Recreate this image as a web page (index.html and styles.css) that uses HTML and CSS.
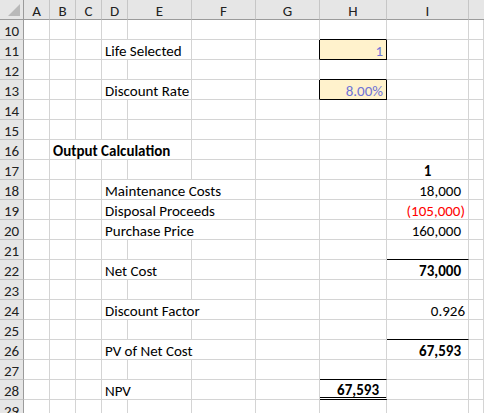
FILE: index.html
```html
<!DOCTYPE html>
<html>
<head>
<meta charset="utf-8">
<link rel="stylesheet" href="styles.css">
</head>
<body>
<div class="sheet">
  <div class="corner"><span class="tri"></span></div>
  <div class="ch">A</div><div class="ch">B</div><div class="ch">C</div><div class="ch">D</div><div class="ch">E</div><div class="ch">F</div><div class="ch">G</div><div class="ch">H</div><div class="ch">I</div><div class="ch last"></div>

  <div class="rh">10</div><div class="c"></div><div class="c"></div><div class="c"></div><div class="c"></div><div class="c"></div><div class="c"></div><div class="c"></div><div class="c bb"></div><div class="c"></div><div class="c"></div>

  <div class="rh">11</div><div class="c"></div><div class="c"></div><div class="c"></div><div class="c txt s2">Life Selected</div><div class="c"></div><div class="c br"></div><div class="c inp">1</div><div class="c"></div><div class="c"></div>

  <div class="rh">12</div><div class="c"></div><div class="c"></div><div class="c"></div><div class="c"></div><div class="c"></div><div class="c"></div><div class="c"></div><div class="c bb"></div><div class="c"></div><div class="c"></div>

  <div class="rh">13</div><div class="c"></div><div class="c"></div><div class="c"></div><div class="c txt s2">Discount Rate</div><div class="c"></div><div class="c br"></div><div class="c inp">8.00%</div><div class="c"></div><div class="c"></div>

  <div class="rh">14</div><div class="c"></div><div class="c"></div><div class="c"></div><div class="c"></div><div class="c"></div><div class="c"></div><div class="c"></div><div class="c"></div><div class="c"></div><div class="c"></div>

  <div class="rh">15</div><div class="c"></div><div class="c"></div><div class="c"></div><div class="c"></div><div class="c"></div><div class="c"></div><div class="c"></div><div class="c"></div><div class="c"></div><div class="c"></div>

  <div class="rh">16</div><div class="c"></div><div class="c txt b s4">Output Calculation</div><div class="c"></div><div class="c"></div><div class="c"></div><div class="c"></div><div class="c"></div>

  <div class="rh">17</div><div class="c"></div><div class="c"></div><div class="c"></div><div class="c"></div><div class="c"></div><div class="c"></div><div class="c"></div><div class="c"></div><div class="c ctr b">1</div><div class="c"></div>

  <div class="rh">18</div><div class="c"></div><div class="c"></div><div class="c"></div><div class="c txt s3">Maintenance Costs</div><div class="c"></div><div class="c"></div><div class="c num">18,000</div><div class="c"></div>

  <div class="rh">19</div><div class="c"></div><div class="c"></div><div class="c"></div><div class="c txt s3">Disposal Proceeds</div><div class="c"></div><div class="c"></div><div class="c num neg">(105,000)</div><div class="c"></div>

  <div class="rh">20</div><div class="c"></div><div class="c"></div><div class="c"></div><div class="c txt s3">Purchase Price</div><div class="c"></div><div class="c"></div><div class="c num">160,000</div><div class="c"></div>

  <div class="rh">21</div><div class="c"></div><div class="c"></div><div class="c"></div><div class="c"></div><div class="c"></div><div class="c"></div><div class="c"></div><div class="c"></div><div class="c bb"></div><div class="c"></div>

  <div class="rh">22</div><div class="c"></div><div class="c"></div><div class="c"></div><div class="c txt s2">Net Cost</div><div class="c"></div><div class="c"></div><div class="c"></div><div class="c num b">73,000</div><div class="c"></div>

  <div class="rh">23</div><div class="c"></div><div class="c"></div><div class="c"></div><div class="c"></div><div class="c"></div><div class="c"></div><div class="c"></div><div class="c"></div><div class="c"></div><div class="c"></div>

  <div class="rh">24</div><div class="c"></div><div class="c"></div><div class="c"></div><div class="c txt s3">Discount Factor</div><div class="c"></div><div class="c"></div><div class="c num plain">0.926</div><div class="c"></div>

  <div class="rh">25</div><div class="c"></div><div class="c"></div><div class="c"></div><div class="c"></div><div class="c"></div><div class="c"></div><div class="c"></div><div class="c"></div><div class="c bb"></div><div class="c"></div>

  <div class="rh">26</div><div class="c"></div><div class="c"></div><div class="c"></div><div class="c txt s3">PV of Net Cost</div><div class="c"></div><div class="c"></div><div class="c num b">67,593</div><div class="c"></div>

  <div class="rh">27</div><div class="c"></div><div class="c"></div><div class="c"></div><div class="c"></div><div class="c"></div><div class="c"></div><div class="c"></div><div class="c bb"></div><div class="c"></div><div class="c"></div>

  <div class="rh">28</div><div class="c"></div><div class="c"></div><div class="c"></div><div class="c txt s2">NPV</div><div class="c"></div><div class="c"></div><div class="c num b dbl">67,593</div><div class="c"></div><div class="c"></div>

  <div class="rh">29</div><div class="c"></div><div class="c"></div><div class="c"></div><div class="c"></div><div class="c"></div><div class="c"></div><div class="c"></div><div class="c"></div><div class="c"></div><div class="c"></div>
</div>
</body>
</html>
```

FILE: styles.css
```css
html, body {
  margin: 0;
  padding: 0;
  background: #ffffff;
  overflow: hidden;
}

.sheet {
  display: grid;
  grid-template-columns: 24px 26px 26px 26px 26px 64px 64px 64px 67px 82px 15px;
  grid-auto-rows: 20px;
  width: 484px;
  font-family: Carlito, Lato, "Liberation Sans", sans-serif;
  font-size: 15px;
  color: #000000;
}

.corner {
  background: #e6e6e6;
  border-right: 1px solid #9b9b9b;
  border-bottom: 1px solid #9b9b9b;
  box-sizing: border-box;
  position: relative;
}

.tri {
  position: absolute;
  right: 3px;
  bottom: 3px;
  width: 0;
  height: 0;
  border-left: 12px solid transparent;
  border-bottom: 12px solid #b9b9b9;
}

.ch {
  background: #e6e6e6;
  border-right: 1px solid #c6c6c6;
  border-bottom: 1px solid #9b9b9b;
  box-sizing: border-box;
  text-align: center;
  line-height: 20px;
  padding-top: 1px;
  color: #222222;
}

.ch.last {
  border-right: none;
}

.rh {
  background: #e6e6e6;
  border-right: 1px solid #9b9b9b;
  border-bottom: 1px solid #c6c6c6;
  box-sizing: border-box;
  text-align: center;
  line-height: 20px;
  padding-top: 1px;
  color: #222222;
}

.c {
  border-right: 1px solid #d4d4d4;
  border-bottom: 1px solid #d4d4d4;
  box-sizing: border-box;
  white-space: nowrap;
  line-height: 20px;
  padding: 1px 3px 0 3px;
  overflow: visible;
}

.s2 { grid-column: span 2; }
.s3 { grid-column: span 3; }
.s4 { grid-column: span 4; }

.txt { text-align: left; }

.b { font-weight: 700; }

.ctr { text-align: center; }

.num {
  text-align: right;
  padding-right: 7px;
}

.num.neg {
  color: #ff0000;
  padding-right: 3px;
}

.num.plain {
  padding-right: 3px;
}

.bb { border-bottom-color: #000000; }
.br { border-right-color: #000000; }

.inp {
  background: #fff2cc;
  border-right-color: #000000;
  border-bottom-color: #000000;
  text-align: right;
  color: #6f74d6;
}

.dbl {
  border-bottom: 3px double #000000;
  line-height: 19px;
}
```
